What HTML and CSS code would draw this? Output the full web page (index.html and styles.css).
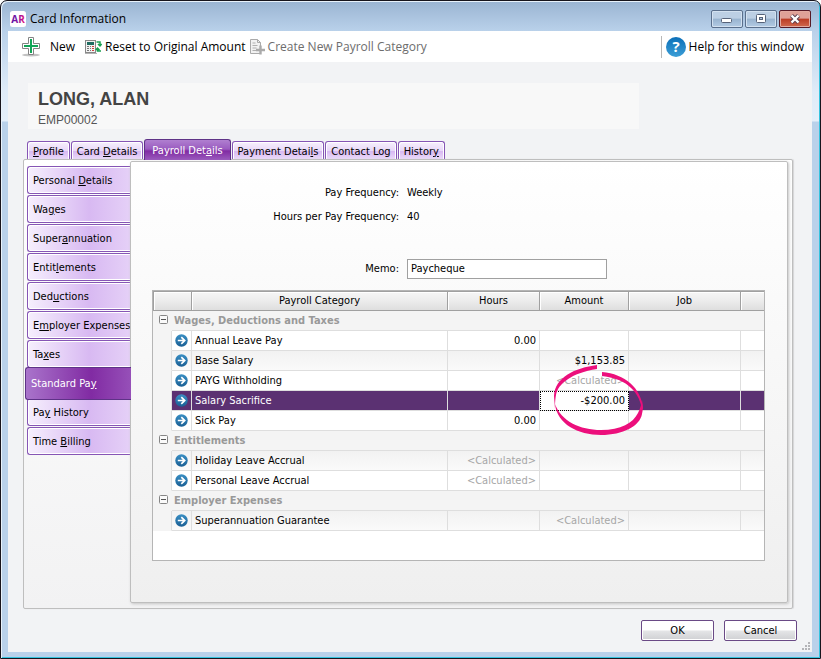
FILE: index.html
```html
<!DOCTYPE html>
<html lang="en">
<head>
<meta charset="utf-8">
<title>Card Information</title>
<link rel="stylesheet" href="styles.css">
</head>
<body>
<svg class="defs" width="0" height="0" aria-hidden="true">
  <defs>
    <linearGradient id="blue" x1="0" y1="0" x2="0" y2="1"><stop offset="0" stop-color="#3a8fc4"/><stop offset="1" stop-color="#1a5f94"/></linearGradient>
    <linearGradient id="help" x1="0" y1="0" x2="0" y2="1"><stop offset="0" stop-color="#0b6fb8"/><stop offset="1" stop-color="#3c9ed6"/></linearGradient>
    <linearGradient id="brand" x1="0" y1="0" x2="1" y2="0"><stop offset="0" stop-color="#5a14a8"/><stop offset=".5" stop-color="#8a12a0"/><stop offset="1" stop-color="#e8127c"/></linearGradient>
    <symbol id="go" viewBox="0 0 13 13"><circle cx="6.5" cy="6.5" r="6.2" fill="url(#blue)"/><path d="M2.8 6.5h6.6M6.3 3.2l3.4 3.3-3.4 3.3" fill="none" stroke="#fff" stroke-width="1.7"/></symbol>
    <symbol id="fold" viewBox="0 0 9 9"><rect x=".5" y=".5" width="8" height="8" rx="1" fill="#fafafa" stroke="#858585"/><path d="M2 4.5h5" stroke="#555"/></symbol>
  </defs>
</svg>
<div class="window">
  <header class="titlebar">
    <svg class="app-icon" width="16" height="16" viewBox="0 0 16 16" aria-hidden="true"><rect width="16" height="16" rx="2.5" fill="#fff"/><text x="8" y="12" text-anchor="middle" class="app-letters" fill="url(#brand)">AR</text></svg>
    <h1>Card Information</h1>
    <div class="window-controls">
      <button class="control" aria-label="Minimize"><svg width="12" height="12" viewBox="0 0 12 12"><rect x=".5" y="5.500" width="10" height="4" rx="1" fill="#fff" stroke="#566279"/></svg></button>
      <button class="control" aria-label="Maximize"><svg width="12" height="12" viewBox="0 0 12 12"><rect x="1.500" y="1.500" width="9" height="8" rx="1" fill="#fff" stroke="#566279"/><rect x="4.500" y="4.500" width="3" height="2" fill="#b3c8e0" stroke="#566279"/></svg></button>
      <button class="control close" aria-label="Close"><svg width="14" height="12" viewBox="0 0 14 12"><path d="M3.500 2.500l7 7M10.500 2.500l-7 7" stroke="#5a3f50" stroke-width="4.200"/><path d="M3.500 2.500l7 7M10.500 2.500l-7 7" stroke="#fff" stroke-width="2.400"/></svg></button>
    </div>
  </header>
  <div class="client">
    <div class="toolbar">
      <button class="tool new">
        <svg width="20" height="20" viewBox="0 0 20 20" aria-hidden="true"><ellipse cx="10" cy="18" rx="9" ry="1.500" fill="#999" opacity=".6"/><path d="M7.500 .5h5v6h6v5h-6v6h-5v-6h-6v-5h6z" fill="#fff" stroke="#858585" stroke-linejoin="round"/><path d="M10 2v14M3 9h14" stroke="#12a558" stroke-width="2"/></svg>
        New</button>
      <button class="tool">
        <svg width="17" height="16" viewBox="0 0 17 16" aria-hidden="true"><rect x=".5" y="1.500" width="10" height="12" fill="#f2f2f2" stroke="#888"/><rect x="2" y="3" width="7" height="3" fill="#1f6b60"/><path d="M2 7.500h2M5 7.500h1M2 9.500h2M5 9.500h1M2 11.500h2M5 11.500h1" stroke="#777"/><path d="M7 7.500h2M7 9.500h2M7 11.500h2" stroke="#d04040"/><path d="M11.500 3H15v3.500M13 5l2 2 1.700-2M16 12h-3.500V9.500M10.700 11l1.800-2 2 2" fill="none" stroke="#18a050" stroke-width="1.500"/><path d="M0 14.500h12" stroke="#b4b4b4"/></svg>
        Reset to Original Amount</button>
      <button class="tool" disabled>
        <svg width="16" height="16" viewBox="0 0 16 16" aria-hidden="true"><path d="M1.500 .5h7l3 3v11h-10z" fill="#f2f2f2" stroke="#aaa"/><path d="M8.500 .5v3h3" fill="none" stroke="#aaa"/><path d="M3.500 4h3M3.500 6.500h5M3.500 9h4M3.500 11.500h4" stroke="#b0b0b0" stroke-width="1.200"/><path d="M11.500 6.500v9M7 11h9" stroke="#aaa" stroke-width="2.400"/></svg>
        Create New Payroll Category</button>
      <button class="tool help">
        <svg width="20" height="20" viewBox="0 0 20 20" aria-hidden="true"><circle cx="10" cy="10" r="10" fill="url(#help)"/><text x="10" y="15" text-anchor="middle" class="help-mark">?</text></svg>
        Help for this window</button>
    </div>
    <section class="card-head">
      <h2>LONG, ALAN</h2>
      <p>EMP00002</p>
    </section>
    <nav class="tabs" aria-label="Card sections">
      <button class="tab"><u>P</u>rofile</button>
      <button class="tab">Card <u>D</u>etails</button>
      <button class="tab active">Payroll Det<u>a</u>ils</button>
      <button class="tab">Payment Detai<u>l</u>s</button>
      <button class="tab">Contact Lo<u>g</u></button>
      <button class="tab">Histor<u>y</u></button>
    </nav>
    <div class="outer">
      <nav class="side" aria-label="Payroll details">
        <button class="side-tab">Personal <u>D</u>etails</button>
        <button class="side-tab">Wa<u>g</u>es</button>
        <button class="side-tab">Super<u>a</u>nnuation</button>
        <button class="side-tab">Entit<u>l</u>ements</button>
        <button class="side-tab">Ded<u>u</u>ctions</button>
        <button class="side-tab">E<u>m</u>ployer Expenses</button>
        <button class="side-tab">Ta<u>x</u>es</button>
        <button class="side-tab active">Standard Pa<u>y</u></button>
        <button class="side-tab">Pa<u>y</u> History</button>
        <button class="side-tab">Time <u>B</u>illing</button>
      </nav>
      <main class="inner">
        <div class="form">
          <span class="label">Pay Frequency:</span><span>Weekly</span>
          <span class="label">Hours per Pay Frequency:</span><span>40</span>
          <label class="label memo" for="memo">Memo:</label><input class="memo" id="memo" type="text" value="Paycheque">
        </div>
        <div class="grid">
          <table>
            <colgroup><col class="c-indent"><col class="c-go"><col><col class="c-hours"><col class="c-amount"><col class="c-job"><col class="c-end"></colgroup>
            <thead>
              <tr><th colspan="2"></th><th>Payroll Category</th><th>Hours</th><th>Amount</th><th>Job</th><th></th></tr>
            </thead>
            <tbody>
              <tr class="group"><td><svg class="fold"><use href="#fold"/></svg></td><th colspan="6" scope="rowgroup">Wages, Deductions and Taxes</th></tr>
              <tr><td class="indent"></td><td class="go"><svg><use href="#go"/></svg></td><td>Annual Leave Pay</td><td class="num">0.00</td><td></td><td></td><td></td></tr>
              <tr class="alt"><td class="indent"></td><td class="go"><svg><use href="#go"/></svg></td><td>Base Salary</td><td></td><td class="num">$1,153.85</td><td></td><td></td></tr>
              <tr><td class="indent"></td><td class="go"><svg><use href="#go"/></svg></td><td>PAYG Withholding</td><td></td><td class="num calc">&lt;Calculated&gt;</td><td></td><td></td></tr>
              <tr class="selected"><td class="indent"></td><td class="go"><svg><use href="#go"/></svg></td><td>Salary Sacrifice</td><td></td><td class="num editing">-$200.00<svg class="ring" width="92" height="74" viewBox="0 0 92 74" aria-hidden="true"><path d="M44 1C22 4 2 13 1 32L2 45C2 42 2 36 3 31C5 20 18 9 44 5z"/><path d="M2 40C4 60 25 71 48 71C70 71 87 62 89 50C90 46 90 42 89 36C88 42 87 45 85 49C80 59 68 66 48 66C27 66 8 57 2 40z"/><path d="M49 8C72 10 88 24 90 44L89 46C87 30 76 15 49 12z"/></svg></td><td></td><td></td></tr>
              <tr><td class="indent"></td><td class="go"><svg><use href="#go"/></svg></td><td>Sick Pay</td><td class="num">0.00</td><td></td><td></td><td></td></tr>
              <tr class="group"><td><svg class="fold"><use href="#fold"/></svg></td><th colspan="6" scope="rowgroup">Entitlements</th></tr>
              <tr class="alt"><td class="indent"></td><td class="go"><svg><use href="#go"/></svg></td><td>Holiday Leave Accrual</td><td class="num calc">&lt;Calculated&gt;</td><td></td><td></td><td></td></tr>
              <tr><td class="indent"></td><td class="go"><svg><use href="#go"/></svg></td><td>Personal Leave Accrual</td><td class="num calc">&lt;Calculated&gt;</td><td></td><td></td><td></td></tr>
              <tr class="group"><td><svg class="fold"><use href="#fold"/></svg></td><th colspan="6" scope="rowgroup">Employer Expenses</th></tr>
              <tr class="alt"><td class="indent"></td><td class="go"><svg><use href="#go"/></svg></td><td>Superannuation Guarantee</td><td></td><td class="num calc">&lt;Calculated&gt;</td><td></td><td></td></tr>
            </tbody>
          </table>
        </div>
      </main>
    </div>
    <footer class="actions">
      <button class="push">OK</button>
      <button class="push">Cancel</button>
      <svg class="grip" width="9" height="9" viewBox="0 0 9 9" aria-hidden="true"><path d="M6 0h2v2H6zM3 3h2v2H3zM6 3h2v2H6zM0 6h2v2H0zM3 6h2v2H3zM6 6h2v2H6z" fill="#b4b4b8"/></svg>
    </footer>
  </div>
</div>
</body>
</html>
```
FILE: styles.css
```css
* { box-sizing: border-box; }

body {
  margin: 0;
  background: #fff;
  color: #000;
  font: 11px/14px "DejaVu Sans Condensed", "DejaVu Sans", sans-serif;
}

button, input { font: inherit; color: inherit; margin: 0; }
h1, h2, p { margin: 0; font-weight: normal; }
svg { display: block; flex: none; }
u { text-underline-offset: 1px; }
.defs { position: absolute; }

/* Window frame */
.window {
  display: flex;
  flex-direction: column;
  min-height: 100vh;
  padding: 0 8px 6px 7px;
  border: 1px solid #17141c;
  border-radius: 7px 7px 0 0;
  box-shadow: inset 1px 1px #e8f2fb, inset -1px -1px #35c3df;
  background: linear-gradient(#9ab4d2 0, #b9d1ea 30px, #dfebf8 90px, #e4effa 120px, #b9d1ea 121px);
}

.titlebar { display: flex; align-items: center; height: 30px; padding: 6px 1px 0 2px; }
.app-icon { margin-right: 4px; }
.app-letters { font: bold 10px "Open Sans", sans-serif; }
.titlebar h1 { font: 12px/18px "Open Sans", sans-serif; }
.window-controls { display: flex; gap: 2px; margin-left: auto; }
.control {
  display: flex;
  align-items: center;
  justify-content: center;
  width: 32px;
  height: 18px;
  padding: 0;
  border: 1px solid #5a6f8c;
  border-radius: 2px;
  box-shadow: inset 0 0 0 1px #d3e1f0;
  background: linear-gradient(#bccfe4 45%, #98b3cf 50%, #b3cbe4);
}
.control.close {
  border-color: #571a26;
  box-shadow: inset 0 0 0 1px #e2aaa0;
  background: linear-gradient(#dfa197 45%, #bb3c24 50%, #d0694e);
}

.client { display: flex; flex: 1; flex-direction: column; background: #f2f3f5; }

/* Toolbar */
.toolbar { display: flex; align-items: center; height: 31px; padding: 0 8px 0 13px; background: #fff; font: 12px/18px "Open Sans", sans-serif; }
.tool { display: flex; align-items: center; gap: 3px; margin-right: 3px; padding: 0; border: 0; background: none; white-space: nowrap; }
.tool.new { gap: 9px; margin-right: 10px; }
.tool:disabled { color: #6d6d6d; }
.tool.help { height: 22px; margin: 0 0 0 auto; padding-left: 4px; border-left: 1px solid #b8b8b8; }
.help-mark { font: bold 15px "Open Sans", sans-serif; fill: #fff; }

/* Card heading */
.card-head { width: 76%; height: 46px; margin: 21px 0 10px 20px; padding: 6px 10px; background: #f8f8f8; }
.card-head h2 { font: bold 18px/20px "Liberation Sans", Arial, sans-serif; color: #444; }
.card-head p { padding-top: 2px; font: 12px/18px "Liberation Sans", Arial, sans-serif; color: #555; }

/* Tabs */
.tabs { display: flex; align-items: flex-end; gap: 1px; height: 20px; padding-left: 19px; }
.tab {
  height: 18px;
  padding: 2px 5px 0;
  border: 1px solid #8655b5;
  border-bottom: 0;
  border-radius: 3px 3px 0 0;
  box-shadow: inset 1px 1px #fff, inset -1px 0 #fff;
  background: linear-gradient(#f7f0fd, #e9d8f8 50%, #d8b9f2 55%, #ead9f9);
  white-space: nowrap;
}
.tab.active {
  z-index: 1;
  height: 21px;
  margin-bottom: -1px;
  padding: 2px 7px 0;
  border-color: #5e3287;
  box-shadow: none;
  background: linear-gradient(#b07fd0, #9a5cc0 45%, #812ba3 55%, #9a5bbd);
  color: #fff;
}

/* Nested panels */
.outer {
  display: flex;
  flex: 1;
  margin: 0 19px 0 15px;
  padding: 1px 4px 5px 3px;
  border: 1px solid #bebebe;
  border-radius: 2px;
  box-shadow: 1px 0 1px #d5d5d8;
  background: linear-gradient(#fff, #f2f2f3);
}
.side { display: flex; flex-direction: column; gap: 1px; width: 103px; padding-top: 5px; }
.side-tab {
  height: 28px;
  padding: 2px 5px 0;
  border: 1px solid #8655b5;
  border-right: 0;
  border-radius: 3px 0 0 3px;
  box-shadow: inset 1px 1px #fff, inset 0 -1px #fff;
  background: linear-gradient(90deg, #f6effd, #d8b9f2 60%, #e5d0f7);
  text-align: left;
  white-space: nowrap;
}
.side-tab.active {
  z-index: 1;
  height: 33px;
  margin: -2px -1px -3px -2px;
  padding-top: 0;
  border-color: #5e3287;
  box-shadow: none;
  background: linear-gradient(90deg, #a974cb, #812ba3 62%, #9650b8);
  color: #fff;
}
.inner {
  flex: 1;
  min-width: 0;
  padding: 21px 22px 41px 21px;
  border: 1px solid #bebebe;
  border-radius: 2px;
  box-shadow: 1px 1px 3px #c4c4c4;
  background: linear-gradient(#fff, #efefef);
}

.form { display: grid; grid-template-columns: 247px minmax(0, 200px); gap: 4px 8px; margin-bottom: 11px; line-height: 20px; }
.form .label { text-align: right; }
.form .memo { margin-top: 28px; }
.form input { height: 20px; padding: 0 3px; border: 1px solid #a0a0a0; background: #fff; }

/* Payroll grid */
.grid { min-height: 271px; border: 1px solid #b5b5b5; background: #fff; }
table { width: 100%; table-layout: fixed; border-collapse: separate; border-spacing: 0; }
.c-indent { width: 19px; }
.c-go { width: 20px; }
.c-hours { width: 92px; }
.c-amount { width: 89px; }
.c-job { width: 112px; }
.c-end { width: 23px; }
th, td { height: 20px; padding: 0 3px; line-height: 14px; white-space: nowrap; }
thead th {
  border: solid #a0a0a0;
  border-width: 1px 1px 1px 0;
  box-shadow: inset 1px 1px #fff;
  background: linear-gradient(#f6f6f6, #ececec 50%, #dedede);
  font-weight: normal;
}
thead th:first-child { border-left-width: 1px; }
thead th:last-child { border-right: 0; }
tbody td { border: solid #dedede; border-width: 0 1px 1px 0; }
tbody td:last-child { border-right: 0; }
.alt td { background: linear-gradient(#f2f2f2, #fafafa); }
.group td, .group th { border: 0; border-bottom: 1px solid #dedede; background: #f4f4f4; }
.group td { padding: 0; border-bottom-color: #f4f4f4; }
.group th { padding-left: 2px; text-align: left; color: #999; }
tr td.indent { border-bottom-color: #f4f4f4; background: #f4f4f4; }
.fold { width: 9px; height: 9px; margin: 0 0 3px 6px; }
.go { padding: 0; }
.go svg { width: 13px; height: 13px; margin: 0 auto; }
.num { text-align: right; }
.calc { color: #a6a6a6; }
.selected td { background: #5b3172; color: #fff; }
tr td.editing { position: relative; outline: 1px dotted #000; outline-offset: -1px; background: #fff; color: #000; }
.ring { position: absolute; top: -27px; left: 13px; fill: #ec0f7c; }

/* Dialog actions */
.actions { position: relative; display: flex; justify-content: flex-end; gap: 10px; height: 43px; padding: 11px 15px 0; }
.push {
  width: 73px;
  height: 21px;
  padding: 0;
  border: 1px solid #6a4a86;
  border-radius: 2px;
  box-shadow: inset 0 0 0 1px #fff;
  background: linear-gradient(#fff 45%, #e3e4e6 55%, #cfd0d3);
}
.grip { position: absolute; right: 1px; bottom: 1px; }
```
